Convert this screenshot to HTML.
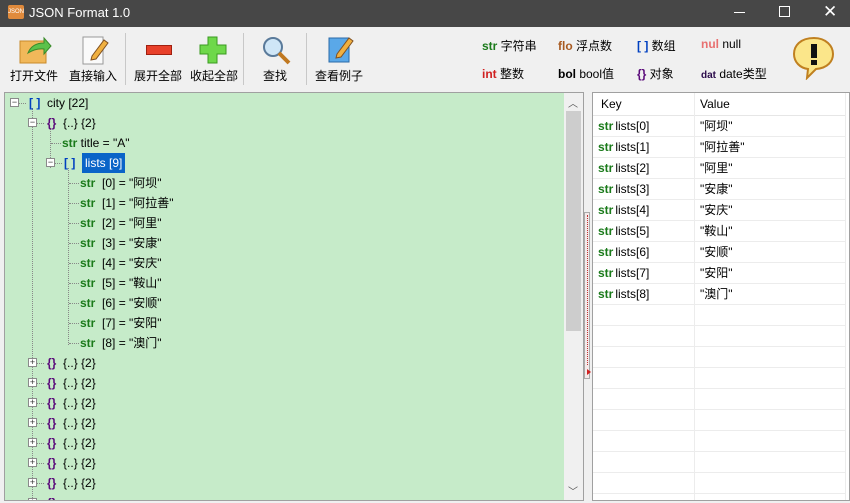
<!DOCTYPE html><html><head><meta charset="utf-8"><style>
*{margin:0;padding:0;box-sizing:border-box}
body{width:850px;height:503px;background:#f0f0f0;font-family:"Liberation Sans","Noto Sans CJK SC",sans-serif;font-size:12px;position:relative;overflow:hidden;color:#000}
.a{position:absolute;white-space:nowrap}
#title{left:0;top:0;width:850px;height:27px;background:#474747;color:#fff;font-size:13px}
.tb{font-size:12px;top:67px}
.sep{position:absolute;top:33px;width:1px;height:52px;background:#c8c8c8}
#tree{left:4px;top:92px;width:580px;height:409px;border:1px solid #a0a0a0;background:#c6ebc9;overflow:hidden}
.r{position:absolute;height:20px;line-height:20px;white-space:nowrap;font-size:12px}
.s{color:#1a7a1a;font-weight:bold}
.b{color:#0040c0;font-weight:bold}
.o{color:#5a0a7a;font-weight:bold}
.ex{position:absolute;width:9px;height:9px;border:1px solid #8a8a8a;background:#fff;font-size:9px;line-height:7px;text-align:center;color:#333}
.vl{position:absolute;border-left:1px dotted #888}
.hl{position:absolute;border-top:1px dotted #888;width:7px}
#right{left:592px;top:92px;width:258px;height:409px;border:1px solid #a0a0a0;background:#fff;overflow:hidden}
.row{position:absolute;left:0;width:252px;height:21px;border-bottom:1px solid #ececec;line-height:20px}
.row .s{margin-right:2px}
</style></head><body>
<div class="a" id="title"><div class="a" style="left:8px;top:5px;width:16px;height:14px;background:#e08a3c;border-radius:2px;font-size:6px;color:#fff;line-height:14px;text-align:center">JSON</div><span class="a" style="left:29px;top:5px">JSON Format 1.0</span>
<div class="a" style="left:734px;top:12px;width:11px;height:1px;background:#fff"></div>
<div class="a" style="left:779px;top:6px;width:11px;height:11px;border:1px solid #fff"></div>
<span class="a" style="left:823px;top:2px;font-size:17px">✕</span></div>
<svg class="a" style="left:18px;top:35px" width="34" height="30"><rect x="2" y="6" width="26" height="22" fill="#f1b85a" stroke="#c98a2a"/><path d="M10 18 Q14 8 26 8 L26 3 L33 11 L26 19 L26 14 Q18 13 10 18Z" fill="#5cc24a" stroke="#3a8a2a"/></svg>
<svg class="a" style="left:80px;top:34px" width="30" height="32"><rect x="3" y="3" width="20" height="27" fill="#fafafa" stroke="#999"/><path d="M12 22 L24 6 L28 9 L16 25 L11 26Z" fill="#f0b040" stroke="#805020"/></svg>
<div class="a" style="left:146px;top:45px;width:26px;height:10px;background:#e8402a;border:1px solid #a02010"></div>
<svg class="a" style="left:199px;top:36px" width="28" height="28"><path d="M9 1h9v8h9v9h-9v9h-9v-9h-8v-9h8z" fill="#6ed84a" stroke="#3a9a20"/></svg>
<svg class="a" style="left:261px;top:35px" width="32" height="30"><circle cx="12" cy="12" r="9" fill="#cfe6f7" stroke="#5a7a9a" stroke-width="2"/><path d="M18 18 L28 28" stroke="#c07820" stroke-width="4"/></svg>
<svg class="a" style="left:325px;top:34px" width="30" height="32"><rect x="4" y="4" width="20" height="24" fill="#5aa8e8" stroke="#2a6aa8"/><path d="M12 20 L24 4 L28 7 L16 23 L11 24Z" fill="#f0b040" stroke="#805020"/></svg>
<span class="a tb" style="left:10px">打开文件</span><span class="a tb" style="left:69px">直接输入</span>
<div class="sep" style="left:125px"></div>
<span class="a tb" style="left:134px">展开全部</span><span class="a tb" style="left:190px">收起全部</span>
<div class="sep" style="left:243px"></div>
<span class="a tb" style="left:263px">查找</span>
<div class="sep" style="left:306px"></div>
<span class="a tb" style="left:315px">查看例子</span>
<span class="a" style="left:482px;top:37px"><b style="color:#1a7a1a">str</b> 字符串</span>
<span class="a" style="left:558px;top:37px"><b style="color:#a85a20">flo</b> 浮点数</span>
<span class="a" style="left:637px;top:37px"><b style="color:#0040c0">[ ]</b> 数组</span>
<span class="a" style="left:701px;top:37px"><b style="color:#e87070">nul</b> null</span>
<span class="a" style="left:482px;top:65px"><b style="color:#d02020">int</b> 整数</span>
<span class="a" style="left:558px;top:65px"><b>bol</b> bool值</span>
<span class="a" style="left:637px;top:65px"><b style="color:#5a0a7a">{}</b> 对象</span>
<span class="a" style="left:701px;top:65px"><b style="font-size:10px;color:#2a0a4a">dat</b> date类型</span>
<svg class="a" style="left:792px;top:35px" width="44" height="45"><path d="M22 3 C8 3 2 11 2 19 C2 27 8 33 16 34 L15 43 L24 34 C36 33 41 26 41 19 C41 11 34 3 22 3Z" fill="#fbe68a" stroke="#c08020" stroke-width="2"/><rect x="19" y="9" width="6" height="14" fill="#111"/><rect x="19" y="25" width="6" height="5" fill="#111"/></svg>
<div class="a" id="tree">
<div class="vl" style="left:27px;top:15px;height:400px"></div>
<div class="vl" style="left:45px;top:35px;height:40px"></div>
<div class="vl" style="left:63px;top:75px;height:177px"></div>
<div class="ex" style="left:5px;top:5px">−</div><div class="hl" style="left:14px;top:10px"></div>
<div class="r" style="left:24px;top:0"><span class="b">[ ]</span>&nbsp; city [22]</div>
<div class="ex" style="left:23px;top:25px">−</div><div class="hl" style="left:32px;top:30px"></div>
<div class="r" style="left:42px;top:20px"><span class="o">{}</span>&nbsp; {..} {2}</div>
<div class="hl" style="left:46px;top:50px;width:10px"></div>
<div class="r" style="left:57px;top:40px"><span class="s">str</span> title = "A"</div>
<div class="ex" style="left:41px;top:65px">−</div><div class="hl" style="left:50px;top:70px"></div>
<div class="r" style="left:59px;top:60px"><span class="b">[ ]</span></div>
<div class="r" style="left:77px;top:60px;background:#0a64c8;color:#fff;padding:0 3px;height:20px">lists [9]</div>
<div class="hl" style="left:64px;top:90px;width:10px"></div><div class="r" style="left:75px;top:80px"><span class="s">str</span>&nbsp; [0] = "阿坝"</div>
<div class="hl" style="left:64px;top:110px;width:10px"></div><div class="r" style="left:75px;top:100px"><span class="s">str</span>&nbsp; [1] = "阿拉善"</div>
<div class="hl" style="left:64px;top:130px;width:10px"></div><div class="r" style="left:75px;top:120px"><span class="s">str</span>&nbsp; [2] = "阿里"</div>
<div class="hl" style="left:64px;top:150px;width:10px"></div><div class="r" style="left:75px;top:140px"><span class="s">str</span>&nbsp; [3] = "安康"</div>
<div class="hl" style="left:64px;top:170px;width:10px"></div><div class="r" style="left:75px;top:160px"><span class="s">str</span>&nbsp; [4] = "安庆"</div>
<div class="hl" style="left:64px;top:190px;width:10px"></div><div class="r" style="left:75px;top:180px"><span class="s">str</span>&nbsp; [5] = "鞍山"</div>
<div class="hl" style="left:64px;top:210px;width:10px"></div><div class="r" style="left:75px;top:200px"><span class="s">str</span>&nbsp; [6] = "安顺"</div>
<div class="hl" style="left:64px;top:230px;width:10px"></div><div class="r" style="left:75px;top:220px"><span class="s">str</span>&nbsp; [7] = "安阳"</div>
<div class="hl" style="left:64px;top:250px;width:10px"></div><div class="r" style="left:75px;top:240px"><span class="s">str</span>&nbsp; [8] = "澳门"</div>
<div class="ex" style="left:23px;top:265px">+</div><div class="hl" style="left:32px;top:270px"></div><div class="r" style="left:42px;top:260px"><span class="o">{}</span>&nbsp; {..} {2}</div>
<div class="ex" style="left:23px;top:285px">+</div><div class="hl" style="left:32px;top:290px"></div><div class="r" style="left:42px;top:280px"><span class="o">{}</span>&nbsp; {..} {2}</div>
<div class="ex" style="left:23px;top:305px">+</div><div class="hl" style="left:32px;top:310px"></div><div class="r" style="left:42px;top:300px"><span class="o">{}</span>&nbsp; {..} {2}</div>
<div class="ex" style="left:23px;top:325px">+</div><div class="hl" style="left:32px;top:330px"></div><div class="r" style="left:42px;top:320px"><span class="o">{}</span>&nbsp; {..} {2}</div>
<div class="ex" style="left:23px;top:345px">+</div><div class="hl" style="left:32px;top:350px"></div><div class="r" style="left:42px;top:340px"><span class="o">{}</span>&nbsp; {..} {2}</div>
<div class="ex" style="left:23px;top:365px">+</div><div class="hl" style="left:32px;top:370px"></div><div class="r" style="left:42px;top:360px"><span class="o">{}</span>&nbsp; {..} {2}</div>
<div class="ex" style="left:23px;top:385px">+</div><div class="hl" style="left:32px;top:390px"></div><div class="r" style="left:42px;top:380px"><span class="o">{}</span>&nbsp; {..} {2}</div>
<div class="ex" style="left:23px;top:405px">+</div><div class="r" style="left:42px;top:400px"><span class="o">{}</span></div>
<div class="a" style="left:559px;top:0;width:19px;height:407px;background:#f0f0f0"></div>
<div class="a" style="left:561px;top:18px;width:15px;height:220px;background:#cdcdcd"></div>
<span class="a" style="left:563px;top:2px;font-size:10px;color:#555">︿</span>
<span class="a" style="left:563px;top:390px;font-size:10px;color:#555">﹀</span>
</div>
<div class="a" style="left:584px;top:212px;width:6px;height:167px;border:1px solid #aaa;background:#f4eaea"></div>
<div class="a" style="left:587px;top:215px;height:150px;border-left:1px dotted #c03030"></div>
<div class="a" style="left:587px;top:369px;width:0;height:0;border-left:4px solid #d02020;border-top:3px solid transparent;border-bottom:3px solid transparent"></div>
<div class="a" id="right">
<div class="a" style="left:0;top:0;width:252px;height:23px;background:#fff;border-bottom:1px solid #e6e6e6"></div>
<span class="a" style="left:8px;top:4px">Key</span><span class="a" style="left:107px;top:4px">Value</span>
<div class="a" style="left:101px;top:0;width:1px;height:409px;background:#ececec"></div>
<div class="a" style="left:252px;top:0;width:1px;height:409px;background:#ececec"></div>
<div class="row" style="top:23px"><span class="a" style="left:5px"><span class="s">str</span>lists[0]</span><span class="a" style="left:107px">"阿坝"</span></div>
<div class="row" style="top:44px"><span class="a" style="left:5px"><span class="s">str</span>lists[1]</span><span class="a" style="left:107px">"阿拉善"</span></div>
<div class="row" style="top:65px"><span class="a" style="left:5px"><span class="s">str</span>lists[2]</span><span class="a" style="left:107px">"阿里"</span></div>
<div class="row" style="top:86px"><span class="a" style="left:5px"><span class="s">str</span>lists[3]</span><span class="a" style="left:107px">"安康"</span></div>
<div class="row" style="top:107px"><span class="a" style="left:5px"><span class="s">str</span>lists[4]</span><span class="a" style="left:107px">"安庆"</span></div>
<div class="row" style="top:128px"><span class="a" style="left:5px"><span class="s">str</span>lists[5]</span><span class="a" style="left:107px">"鞍山"</span></div>
<div class="row" style="top:149px"><span class="a" style="left:5px"><span class="s">str</span>lists[6]</span><span class="a" style="left:107px">"安顺"</span></div>
<div class="row" style="top:170px"><span class="a" style="left:5px"><span class="s">str</span>lists[7]</span><span class="a" style="left:107px">"安阳"</span></div>
<div class="row" style="top:191px"><span class="a" style="left:5px"><span class="s">str</span>lists[8]</span><span class="a" style="left:107px">"澳门"</span></div>
<div class="row" style="top:212px"></div><div class="row" style="top:233px"></div><div class="row" style="top:254px"></div><div class="row" style="top:275px"></div><div class="row" style="top:296px"></div><div class="row" style="top:317px"></div><div class="row" style="top:338px"></div><div class="row" style="top:359px"></div><div class="row" style="top:380px"></div>
</div>
</body></html>
